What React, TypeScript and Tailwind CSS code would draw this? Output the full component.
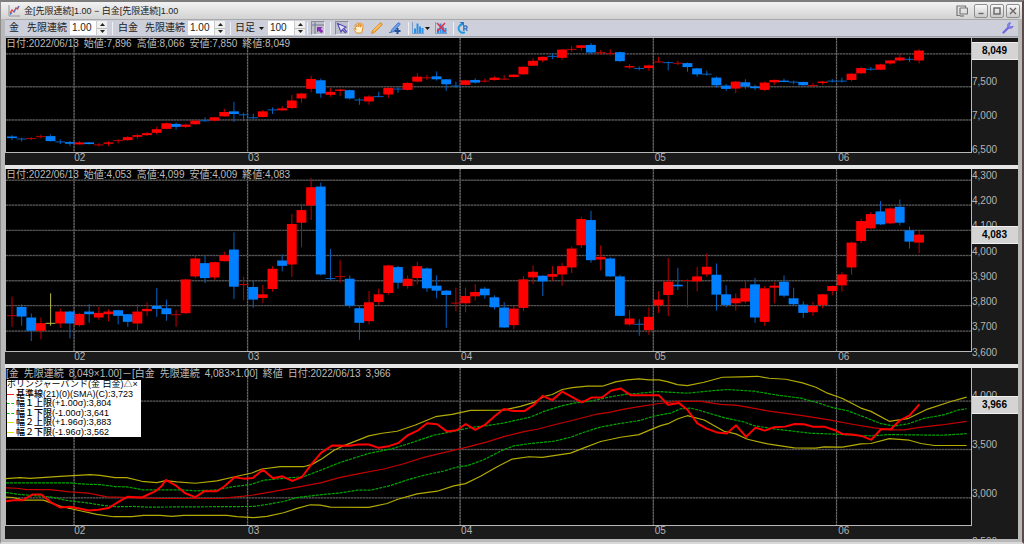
import React from "react";

type Tone = "r" | "b" | "y";
type Candle = [Tone, number, number, number, number];
type Line = { points: string; color: string; width: number; dash?: string };

// tone, high, body top, body bottom, low (chart units, three per pixel)
const gold: Candle[] = [
  ["b",318,322,327,333],["b",326,328,330,337],["r",324,327,330,333],["r",316,321,324,328],["b",316,321,336,337],
  ["b",331,337,339,345],["b",336,339,344,351],["r",337,340,346,346],["b",339,340,345,346],["r",343,346,348,352],
  ["r",337,340,344,351],["r",330,333,336,343],["r",321,324,333,335],["r",315,318,323,329],["r",308,312,318,320],
  ["r",292,300,311,315],["r",280,282,299,300],["b",280,284,293,301],["r",283,286,293,296],["r",270,274,285,287],
  ["b",264,273,275,278],["r",263,264,274,276],["r",238,248,261,263],["b",217,246,254,278],["b",250,255,257,276],
  ["b",253,264,266,270],["r",242,246,263,264],["b",234,240,243,254],["r",230,237,243,244],["r",196,213,236,239],
  ["r",190,192,207,220],["r",138,148,178,188],["b",147,152,192,205],["r",175,187,196,202],["r",178,180,184,200],
  ["b",180,182,207,210],["b",206,210,213,226],["r",197,201,216,226],["b",187,200,202,203],["r",174,175,195,205],
  ["b",173,177,180,190],["r",158,160,181,183],["r",130,141,156,158],["r",135,143,146,151],["b",125,140,149,153],
  ["b",148,149,164,184],["b",156,168,170,175],["r",150,152,166,168],["b",146,151,159,162],["r",146,153,155,159],
  ["r",140,144,151,153],["r",137,147,149,150],["r",133,135,142,144],["r",110,111,134,136],["r",85,93,108,109],
  ["r",80,81,92,98],["b",70,78,81,88],["r",57,59,84,90],["r",48,57,59,66],["r",45,46,54,62],
  ["b",39,45,68,73],["r",60,67,69,74],["r",58,69,71,76],["b",65,67,94,96],["r",103,109,113,117],
  ["b",110,115,117,122],["r",105,107,115,124],["r",81,95,97,98],["b",95,97,100,122],["r",92,99,101,106],
  ["b",98,100,112,126],["b",114,116,134,141],["b",123,132,135,138],["b",141,144,167,174],["b",163,168,178,184],
  ["r",154,156,177,191],["b",149,158,171,178],["b",165,171,176,182],["r",156,159,181,185],["r",149,151,158,166],
  ["b",147,153,157,158],["b",153,156,159,164],["b",156,157,167,168],["r",160,166,168,174],["r",154,156,160,165],
  ["b",148,153,155,159],["b",144,153,155,159],["r",130,132,151,155],["r",111,115,131,132],["b",112,117,120,123],
  ["r",102,104,120,121],["r",91,92,101,104],["r",72,83,92,94],["b",80,87,90,97],["r",58,62,92,101],
];

const platinum: Candle[] = [
  ["r",412,468,470,503],["b",435,443,472,500],["b",463,475,515,546],["r",475,492,515,541],["y",402,491,494,500],
  ["r",448,457,493,506],["b",455,457,493,538],["r",462,464,498,502],["b",435,457,465,491],["r",443,461,475,482],
  ["r",450,457,465,486],["b",452,453,470,496],["b",464,465,488,503],["r",435,457,493,514],["r",429,449,456,470],
  ["b",386,440,449,473],["b",421,447,465,485],["r",452,465,467,503],["r",358,360,462,465],["r",288,297,351,356],
  ["b",288,311,356,371],["r",307,308,354,361],["r",276,287,305,306],["b",218,270,382,419],["r",352,374,377,423],
  ["b",364,383,421,446],["r",377,405,416,432],["r",320,328,389,397],["b",285,303,319,336],["r",162,193,315,352],
  ["r",132,151,189,263],["r",54,82,137,181],["b",68,80,345,348],["b",268,356,359,363],["r",301,350,353,370],
  ["b",348,358,439,446],["b",440,447,491,542],["r",395,429,486,496],["r",388,405,428,437],["r",316,318,401,406],
  ["b",319,323,370,388],["r",348,358,380,388],["r",307,320,356,375],["b",324,327,387,398],["b",348,379,394,417],
  ["b",392,394,407,506],["r",385,430,433,456],["r",385,410,432,459],["r",374,398,411,424],["b",383,388,408,418],
  ["b",408,414,444,451],["b",428,445,505,506],["r",440,448,498,510],["r",350,360,446,456],["r",318,337,354,374],
  ["b",348,349,366,410],["r",320,344,352,364],["r",310,320,345,379],["r",261,267,324,341],["r",171,178,257,265],
  ["b",153,181,302,310],["r",258,292,300,333],["b",293,297,351,352],["b",346,351,470,471],["r",452,478,496,500],
  ["b",480,494,497,530],["r",444,473,513,527],["r",396,421,438,461],["r",295,367,407,471],["b",325,376,381,392],
  ["r",360,362,364,445],["r",322,351,366,396],["r",282,322,345,352],["b",312,346,406,454],["b",378,405,437,444],
  ["r",402,417,432,454],["r",366,387,427,432],["b",355,375,475,491],["r",380,387,488,500],["r",369,379,385,432],
  ["b",348,367,409,414],["b",385,417,435,438],["b",426,436,461,476],["r",428,440,459,470],["r",404,405,437,447],
  ["r",378,380,395,408],["r",338,345,378,397],["r",246,249,324,346],["r",177,184,244,250],["r",157,163,206,208],
  ["b",124,155,194,196],["r",143,146,191,193],["b",119,141,189,197],["b",201,212,246,267],["r",213,225,249,282],
];

const yellow = "#b3ab00";
const green = "#00a800";

const bands: Line[] = [
  { color: yellow, width: 1.2, points: "18,373 60,370 90,372 180,366 270,361 300,363 345,370 380,370 425,381 470,385 497,379 530,383 585,387 650,380 700,368 755,356 785,344 840,337 910,337 935,330 965,313 1000,288 1020,278 1105,244 1145,236 1190,230 1245,211 1305,186 1355,179 1410,167 1510,166 1560,155 1600,143 1630,125 1655,119 1685,104 1715,98 1760,94 1805,94 1845,81 1880,75 1915,72 1945,75 1975,75 2000,80 2030,89 2060,92 2110,82 2165,67 2220,66 2270,64 2305,70 2355,73 2405,84 2445,97 2480,115 2525,131 2580,160 2610,170 2665,200 2720,192 2780,163 2850,140 2897,127" },
  { color: green, width: 1.2, dash: "3 1", points: "18,386 210,386 260,390 300,391 345,397 380,398 430,407 545,407 585,410 650,407 700,397 750,391 790,378 840,373 910,367 960,348 1020,324 1105,297 1170,284 1220,269 1300,242 1360,230 1415,218 1460,213 1510,205 1590,187 1630,170 1680,154 1720,145 1770,139 1820,128 1870,119 1920,115 1970,110 2060,115 2130,108 2180,104 2260,109 2330,121 2400,130 2450,144 2500,160 2540,168 2590,187 2640,207 2680,214 2720,208 2770,191 2830,180 2870,166 2897,162" },
  { color: "#c40000", width: 1.2, points: "18,401 50,402 80,406 150,406 210,413 265,417 320,428 425,431 480,433 660,433 700,429 750,424 800,415 850,406 900,397 960,386 1020,369 1080,357 1150,344 1210,328 1270,309 1320,297 1400,278 1460,262 1510,246 1570,231 1610,224 1670,208 1720,196 1790,178 1830,172 1870,163 1920,155 1970,147 2030,140 2100,140 2160,149 2210,152 2310,170 2400,182 2480,195 2550,208 2620,220 2670,226 2710,226 2750,219 2820,211 2897,200" },
  { color: green, width: 1.2, dash: "3 1", points: "18,415 60,421 150,428 200,439 260,446 310,454 350,458 400,457 440,459 760,457 800,451 850,442 890,430 950,423 1020,416 1070,408 1110,408 1170,394 1220,377 1270,363 1330,350 1370,338 1400,334 1450,316 1500,290 1540,274 1590,267 1660,260 1710,248 1750,233 1800,217 1850,208 1920,197 1960,184 2010,175 2040,162 2070,160 2100,168 2170,189 2230,202 2260,213 2320,223 2380,230 2430,236 2510,239 2580,243 2620,244 2660,240 2820,242 2870,239 2897,237" },
  { color: yellow, width: 1.2, points: "18,429 40,430 70,438 130,438 180,456 240,470 290,481 340,488 395,488 430,484 480,484 515,487 550,484 680,484 710,488 760,491 800,487 850,476 890,463 930,452 960,453 990,459 1105,460 1160,448 1190,436 1250,419 1310,411 1360,395 1395,388 1440,366 1490,337 1535,314 1585,307 1625,309 1710,296 1750,280 1800,261 1860,248 1915,240 1950,225 1980,213 2005,206 2030,193 2060,183 2110,196 2170,230 2205,238 2240,254 2300,268 2380,280 2445,281 2470,277 2525,278 2580,268 2610,267 2665,252 2725,257 2760,267 2800,273 2897,273" },
  { color: "#ff0000", width: 2, points: "18,441 40,438 68,438 97,421 124,421 152,444 180,460 210,458 237,463 266,469 295,467 325,462 352,445 382,428 425,430 466,411 483,397 497,377 526,393 555,417 585,429 613,411 650,411 673,396 703,369 730,373 758,371 788,346 818,372 846,366 876,380 905,368 933,330 962,295 995,273 1048,274 1072,270 1105,270 1135,280 1165,275 1195,265 1222,242 1250,229 1280,206 1310,209 1340,231 1368,227 1396,208 1424,226 1453,211 1483,184 1510,163 1540,169 1571,169 1598,152 1626,123 1655,136 1685,110 1715,127 1744,143 1774,128 1804,128 1832,107 1860,101 1890,121 1974,121 2002,150 2035,145 2060,165 2090,206 2118,222 2150,234 2178,237 2206,212 2236,247 2264,219 2292,228 2320,218 2352,216 2382,208 2410,209 2435,216 2470,216 2500,226 2525,238 2552,240 2582,244 2611,256 2640,224 2670,224 2697,197 2726,182 2755,149" },
];

const tones: Record<Tone, [string, string]> = {
  r: ["#ff0000", "#c00000"],
  b: ["#0080ff", "#0062c4"],
  y: ["#c8c850", "#b8b848"],
};

const months = [222, 742, 1379, 1958, 2507];

function Plot({ top, height, rows, candles = [], lines = [], label }: {
  top: number; height: number; rows: number[]; candles?: Candle[]; lines?: Line[]; label: string;
}) {
  return (
    <svg role="img" aria-label={label} viewBox={`18 ${top} 2892 ${height}`} preserveAspectRatio="none" className="block h-full w-full">
      {rows.map((y) => (
        <g key={y}>
          <line x1="18" x2="2910" y1={y} y2={y} stroke="#303030" strokeWidth="1.4" vectorEffect="non-scaling-stroke" />
          <line x1="18" x2="2910" y1={y} y2={y} stroke="#585858" strokeWidth="1" strokeDasharray="2 1" vectorEffect="non-scaling-stroke" />
        </g>
      ))}
      {months.map((x) => (
        <g key={x}>
          <line x1={x} x2={x} y1={top} y2={top + height} stroke="#383838" strokeWidth="1.4" vectorEffect="non-scaling-stroke" />
          <line x1={x} x2={x} y1={top} y2={top + height} stroke="#686868" strokeWidth="1" strokeDasharray="2 1" vectorEffect="non-scaling-stroke" />
        </g>
      ))}
      {candles.map(([tone, high, open, close, low], i) => {
        const x = 36 + i * 28.92;
        return (
          <g key={i}>
            <rect x={x - 1.5} y={high} width="3" height={low - high} fill={tones[tone][1]} />
            <rect x={x - 15} y={open} width="29.5" height={Math.max(3, close - open)} fill={close - open > 3 ? tones[tone][0] : tones[tone][1]} />
          </g>
        );
      })}
      {lines.map((l, i) => (
        <polyline key={i} points={l.points} fill="none" stroke={l.color} strokeWidth={l.width} strokeDasharray={l.dash} strokeLinejoin="round" vectorEffect="non-scaling-stroke" />
      ))}
    </svg>
  );
}

type Tick = { text: string; at: number };

function Panel({ caption, ticks, badge, children, rows }: {
  caption: string[]; ticks: Tick[]; badge: Tick; children: React.ReactNode; rows: string;
}) {
  return (
    <section className="grid min-h-0 grid-cols-[1fr_46px] bg-[#1a1a1a] text-[10px] leading-[12px] text-[#b4b4b4]">
      <div className={`grid min-h-0 min-w-0 ${rows}`}>
        <div className="relative min-h-0 border-r border-b border-l border-[#b8b8b8] bg-black">
          {children}
          <p className="absolute top-0 left-0 flex gap-[5px] whitespace-nowrap text-[#bcbcbc]">
            {caption.map((c, i) => <span key={i}>{c}</span>)}
          </p>
        </div>
        <div className="grid grid-cols-[204fr_520fr_637fr_579fr_549fr_403fr] leading-[10px]">
          <span />
          {["02", "03", "04", "05", "06"].map((m) => <span key={m} className="pl-px">{m}</span>)}
        </div>
      </div>
      <div className="relative min-h-0 overflow-hidden">
        {ticks.map((t) => (
          <span key={t.text} className="absolute left-0 -translate-y-1/2" style={{ top: `${t.at}%` }}>{t.text}</span>
        ))}
        <strong className="absolute right-0 left-0 h-[18px] -translate-y-1/2 border-y border-[#efefef] bg-[#d4d4d4] pr-[11px] text-right leading-[15px] text-black" style={{ top: `${badge.at}%` }}>
          {badge.text}
        </strong>
      </div>
    </section>
  );
}

function Spinner({ label, value }: { label: string; value: string }) {
  return (
    <div className="flex h-[14px] w-[37px] bg-white">
      <input aria-label={label} defaultValue={value} className="w-[26px] bg-white pl-[2px] text-[10px] leading-[12px] text-[#222] outline-none" />
      <div className="flex flex-1 flex-col border-l border-[#ccc] bg-[#f0f0f0]">
        <button aria-label={`${label} +`} className="flex flex-1 items-center justify-center">
          <svg viewBox="0 0 5 3" className="h-[3px] w-[5px]"><path d="M0 3 2.5 0 5 3z" fill="#222" /></svg>
        </button>
        <button aria-label={`${label} -`} className="flex flex-1 items-center justify-center border-t border-[#bbb]">
          <svg viewBox="0 0 5 3" className="h-[3px] w-[5px]"><path d="M0 0h5L2.5 3z" fill="#222" /></svg>
        </button>
      </div>
    </div>
  );
}

const Divider = () => <i className="h-[13px] w-px bg-[#eef0f4]" />;

function Tool({ label, pressed, children }: { label: string; pressed?: boolean; children: React.ReactNode }) {
  return (
    <button aria-label={label} className={`flex h-[14px] w-[14px] items-center justify-center ${pressed ? "border border-[#8d8d98] border-r-[#e8e8ee] border-b-[#e8e8ee] bg-[#bfc1cc]" : ""}`}>
      <svg viewBox="0 0 12 12" className="h-3 w-3 shrink-0" fill="none">{children}</svg>
    </button>
  );
}

const Bars = () => (
  <>
    <path d="M.5 0v11.500H12" stroke="#7a9cc8" />
    <path d="M2 6.500h2V11H2zM4.500 1.500h2V11h-2zM7 4.500h2V11H7zM9.500 6h2v5h-2z" fill="#2a90ea" />
  </>
);

const Caret = () => <svg viewBox="0 0 5 3" className="h-[3px] w-[5px]"><path d="M0 0h5L2.500 3z" fill="#111" /></svg>;

function WindowButton({ label, children }: { label: string; children: React.ReactNode }) {
  return (
    <button aria-label={label} className="flex h-[14px] w-[14px] items-center justify-center rounded-[2px] border border-[#8f8f8f] bg-linear-to-b from-[#fafafa] to-[#c9c9c9]">
      <svg viewBox="0 0 8 8" className="h-2 w-2" fill="none" stroke="#666" strokeWidth="1.400">{children}</svg>
    </button>
  );
}

const legend = [
  { text: "基準線(21)(0)(SMA)(C):3,723", swatch: "border-[#ff2020]" },
  { text: "幅１上限(+1.00σ):3,804", swatch: "border-dashed border-[#00c000]" },
  { text: "幅１下限(-1.00σ):3,641", swatch: "border-dashed border-[#00c000]" },
  { text: "幅２上限(+1.96σ):3,883", swatch: "border-[#e0e000]" },
  { text: "幅２下限(-1.96σ):3,562", swatch: "border-[#e0e000]" },
];

export default function App() {
  return (
    <main className="flex h-screen min-h-[400px] flex-col overflow-hidden border-t-2 border-r-2 border-b-2 border-l border-t-[#7d7d7d] border-r-[#5c4a4a] border-b-[#d8d8d8] border-l-[#8c8c8c] bg-[#b9b9b9] pr-1 pb-[3px] pl-1 font-['Liberation_Sans','Noto_Sans_CJK_JP',sans-serif]">
      <header className="-mr-1 -ml-1 flex h-[17px] shrink-0 items-center bg-linear-to-b from-[#f2f2f2] to-[#d2d2d2] pr-[2px] pl-[7px]">
        <svg viewBox="0 0 12 12" className="h-3 w-3" fill="none">
          <path d="M1 0v11h11" stroke="#999" />
          <path d="m2 8 2-3 2 2 2-4 1.500 1L11 1" stroke="#e04040" strokeWidth="1.300" />
          <path d="m2 9.500 2-2M6 7l1-2M9 4l2-3" stroke="#4078d0" strokeWidth="1.300" />
        </svg>
        <h1 className="ml-1 text-[9px] leading-[14px] whitespace-pre text-[#222]">
          金[先限連続]1.00 − 白金[先限連続]1.00
        </h1>
        <div className="ml-auto flex items-center gap-[2px]">
          <button aria-label="複製" className="mr-1 h-3 w-3">
            <svg viewBox="0 0 12 12" className="h-3 w-3" fill="none" stroke="#777" strokeWidth="1.200">
              <path d="M4 10.500H1V1h8.500v2" /><rect x="4" y="3" width="7.500" height="6" rx=".5" /><path d="M4 11h4" />
            </svg>
          </button>
          <WindowButton label="最小化"><path d="M1.500 6.500h5" /></WindowButton>
          <WindowButton label="最大化"><rect x="1" y="1" width="6" height="6" /></WindowButton>
          <WindowButton label="閉じる"><path d="m1 1 6 6M7 1 1 7" /></WindowButton>
        </div>
      </header>

      <div className="mb-px flex h-[18px] shrink-0 items-center border-t border-b border-t-[#a8a8a8] border-b-[#9ba0ac] bg-[#cdd0da] pl-1 text-[10px] leading-[14px] text-[#222]">
        <span>金</span>
        <span className="ml-2">先限連続</span>
        <div className="ml-[3px]"><Spinner label="金倍率" value="1.00" /></div>
        <div className="mr-[5px] ml-[5px] flex"><Divider /></div>
        <span>白金</span>
        <span className="ml-[7px]">先限連続</span>
        <div className="ml-[3px]"><Spinner label="白金倍率" value="1.00" /></div>
        <div className="mr-1 ml-[5px] flex"><Divider /></div>
        <label className="flex items-center gap-1">
          <select aria-label="足種" className="w-5 appearance-none overflow-hidden bg-transparent p-0 text-[10px] outline-none"><option>日足</option></select>
          <Caret />
        </label>
        <div className="ml-1"><Spinner label="本数" value="100" /></div>
        <div className="mr-[3px] ml-[2px] flex"><Divider /></div>
        <Tool label="クロスカーソル" pressed>
          <path d="M3 0v12M0 3h12" stroke="#77778f" /><path d="M5 5h5.500L8.800 6.700 11.200 9.200 9.200 11.200 6.700 8.800 5 10.500z" fill="#8a2bb8" />
        </Tool>
        <div className="mr-1 ml-[5px] flex"><Divider /></div>
        <Tool label="選択" pressed>
          <path d="M1.500 1.500 10 5 7.500 6.500l3 3-1.200 1.200-3-3L5 10z" fill="#e6e4fa" stroke="#5048b0" strokeWidth="1.100" />
        </Tool>
        <div className="ml-[3px] flex gap-1">
          <Tool label="移動">
            <path d="M3.500 11 1 7.500c-.5-1 .7-1.300 1.300-.5L3 7.800 2 3.500c-.1-1 1-1.100 1.300-.2L4 5V1.500C4 .6 5.400.6 5.500 1.500L5.800 5l.6-3.800c.2-.9 1.400-.7 1.400.2L7.500 5.200l1.300-2.700c.5-.8 1.500-.3 1.300.5L9.500 8 8.500 11z" fill="#fff0cc" stroke="#dd9030" />
          </Tool>
          <Tool label="鉛筆">
            <path d="M.5 11.500 1.500 8.500 9 1c1-.8 2.800.8 2 2L3.500 10.500z" fill="#f0a93c" stroke="#d98a24" strokeWidth=".8" /><path d="m3 8.500 6-6" stroke="#ffdc98" />
          </Tool>
          <Tool label="ペン追加">
            <path d="M0 10.500h1.500L3 7.500 9 1c1-.8 2.500.5 1.800 1.600L5 9.500l-3.500 1" fill="#6ba0e8" stroke="#3c70c8" strokeWidth=".9" /><path d="M8.500 6v6M5.500 9h6" stroke="#24509c" strokeWidth="2" />
          </Tool>
        </div>
        <div className="mr-[2px] ml-[6px] flex"><Divider /></div>
        <Tool label="指標"><Bars /></Tool>
        <div className="mr-1 flex"><Caret /></div>
        <Tool label="指標削除"><Bars /><path d="m2 1 8 8.500M10 1 2 9.500" stroke="#e03048" strokeWidth="1.500" /></Tool>
        <div className="mr-[2px] ml-[5px] flex"><Divider /></div>
        <Tool label="更新">
          <path d="M5 2.500C1.500 3 .5 7 3 9.500c1.500 1.400 3.500 1.500 5 .7" stroke="#1c9ae0" strokeWidth="1.800" /><path d="M2.500 0h4.500v4.500z" fill="#1c7cd0" /><path d="M6.800 9V4h2q1.300 0 1.300 1.300T8.800 6.600h-2M8.800 6.600 10.300 9" stroke="#3878c8" strokeWidth="1.400" />
        </Tool>
        <button aria-label="設定" className="mr-1 ml-auto h-3 w-3">
          <svg viewBox="0 0 12 12" className="h-3 w-3" fill="none">
            <path d="m1.500 10.500 5-5" stroke="#7068e0" strokeWidth="2.400" strokeLinecap="round" />
            <path d="M8.500.8C6 .5 4.800 3 6 5s4.500 1.800 5.200-.8L9 5 7.200 3.500z" fill="#8c88f0" stroke="#6a64dc" strokeWidth=".8" />
          </svg>
        </button>
      </div>

      <div className="grid min-h-0 flex-1 grid-rows-[127fr_195fr_171fr] gap-1 bg-[#e6e6e6]">
        <Panel
          rows="grid-rows-[115fr_12fr]"
          caption={["日付:2022/06/13", "始値:7,896", "高値:8,066", "安値:7,850", "終値:8,049"]}
          ticks={[{ text: "7,500", at: 35 }, { text: "7,000", at: 61.5 }, { text: "6,500", at: 88 }]}
          badge={{ text: "8,049", at: 10 }}
        >
          <Plot label="金" top={24} height={345} rows={[72, 171.5, 272]} candles={gold} />
        </Panel>
        <Panel
          rows="grid-rows-[183fr_12fr]"
          caption={["日付:2022/06/13", "始値:4,053", "高値:4,099", "安値:4,009", "終値:4,083"]}
          ticks={["4,300", "4,200", "4,100", "4,000", "3,900", "3,800", "3,700", "3,600"].map((text, i) => ({ text, at: 3.5 + i * 12.95 }))}
          badge={{ text: "4,083", at: 34 }}
        >
          <Plot label="白金" top={27} height={549} rows={[61, 136, 212, 288, 364, 439, 516]} candles={platinum} />
        </Panel>
        <Panel
          rows="grid-rows-[158fr_13fr]"
          caption={["[金", "先限連続", "8,049×1.00]－[白金", "先限連続", "4,083×1.00]", "終値", "日付:2022/06/13", "3,966"]}
          ticks={[{ text: "4,000", at: 16.5 }, { text: "3,500", at: 45 }, { text: "3,000", at: 73.5 }, { text: "2,500", at: 102 }]}
          badge={{ text: "3,966", at: 21.5 }}
        >
          <Plot label="金 − 白金" top={39} height={474} rows={[139, 285, 431]} lines={bands} />
          <div className="absolute top-[12px] left-px grid h-[57px] w-[134px] grid-rows-6 items-center bg-white text-[9px] leading-[9px] whitespace-nowrap text-black">
            <span>ボリンジャーバンド(金 白金)△×</span>
            {legend.map((l) => (
              <span key={l.text} className="flex items-center gap-[2px]">
                <i className={`w-[7px] border-t ${l.swatch}`} />
                <b className="font-medium">{l.text}</b>
              </span>
            ))}
          </div>
        </Panel>
      </div>
    </main>
  );
}
